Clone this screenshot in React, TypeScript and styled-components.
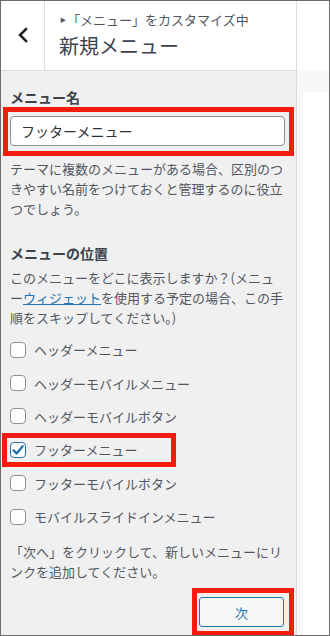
import styled, { createGlobalStyle } from "styled-components";

const GlobalStyle = createGlobalStyle`
  html, body {
    margin: 0;
    padding: 0;
    background: #ffffff;
  }
  *, *::before, *::after {
    box-sizing: border-box;
  }
  body {
    font-family: "Noto Sans CJK JP", "Noto Sans", sans-serif;
    -webkit-font-smoothing: antialiased;
  }
`;

const Frame = styled.div`
  width: 330px;
  height: 636px;
  display: flex;
  border: 1px solid #6b6b6b;
  overflow: hidden;
`;

const Sidebar = styled.div`
  width: 296px;
  flex: none;
  display: flex;
  flex-direction: column;
  background: #f0f0f1;
  border-right: 1px solid #dcdcde;
`;

const Header = styled.div`
  height: 70px;
  flex: none;
  display: flex;
  background: #ffffff;
  border-bottom: 1px solid #dcdcde;
`;

const BackButton = styled.div`
  width: 44px;
  flex: none;
  display: flex;
  align-items: center;
  justify-content: center;
  border-right: 1px solid #dcdcde;
  padding-bottom: 2px;
`;

const TitleBlock = styled.div`
  display: flex;
  flex-direction: column;
  padding: 9px 0 0 14px;
`;

const Breadcrumb = styled.div`
  font-size: 13px;
  line-height: 20px;
  color: #50575e;
  display: flex;
  align-items: center;
`;

const Arrow = styled.span`
  font-size: 6px;
  margin: 0 1px 0 1px;
  color: #50575e;
`;

const Title = styled.div`
  font-size: 20px;
  line-height: 28px;
  color: #3c434a;
  margin-top: 2px;
`;

const Body = styled.div`
  padding: 16px 9px 0 9px;
  display: flex;
  flex-direction: column;
`;

const Heading = styled.div<{ $top?: number }>`
  font-size: 14px;
  line-height: 20px;
  font-weight: 700;
  color: #3c434a;
  margin-top: ${(p) => p.$top ?? 0}px;
`;

const Text = styled.p<{ $top?: number }>`
  margin: ${(p) => p.$top ?? 0}px 0 0 0;
  font-size: 13px;
  line-height: 20px;
  color: #50575e;
  white-space: nowrap;
`;

const Link = styled.a`
  color: #2271b1;
  text-decoration: underline;
`;

const RedFrame = styled.div<{ $pad: string; $left: number; $width: number }>`
  border: 5px solid #f21b0c;
  padding: ${(p) => p.$pad};
  margin-left: ${(p) => p.$left}px;
  width: ${(p) => p.$width}px;
`;

const NameInput = styled.input`
  display: block;
  width: 275px;
  height: 30px;
  padding: 0 10px;
  border: 1px solid #8c8f94;
  border-radius: 4px;
  background: #ffffff;
  font-family: "Noto Sans CJK JP", "Noto Sans", sans-serif;
  font-size: 14px;
  color: #2c3338;
  outline: none;
`;

const Options = styled.div`
  margin-top: 5px;
  display: flex;
  flex-direction: column;
`;

const Row = styled.label<{ $marked?: boolean }>`
  position: relative;
  height: 33.4px;
  display: flex;
  align-items: center;
  gap: 8px;
  font-size: 13px;
  color: #50575e;

  &::after {
    content: "";
    display: ${(p) => (p.$marked ? "block" : "none")};
    position: absolute;
    left: -8px;
    top: 0;
    width: 174px;
    height: 34px;
    border: 5px solid #f21b0c;
    pointer-events: none;
  }
`;

const Box = styled.span<{ $checked?: boolean }>`
  width: 16px;
  height: 16px;
  flex: none;
  display: flex;
  align-items: center;
  justify-content: center;
  background: #ffffff;
  border: 1px solid ${(p) => (p.$checked ? "#2271b1" : "#8c8f94")};
  border-radius: 4px;
`;

const Footer = styled.div`
  display: flex;
  justify-content: flex-end;
  margin-top: 6px;
  margin-right: -7px;
`;

const NextButton = styled.button`
  width: 85px;
  height: 30px;
  border: 1px solid #2271b1;
  border-radius: 3px;
  background: #f6f7f7;
  color: #2271b1;
  font-family: "Noto Sans CJK JP", "Noto Sans", sans-serif;
  font-size: 13px;
  padding: 0;
`;

const Preview = styled.div`
  flex: 1;
  display: flex;
  flex-direction: column;
  background: #f6f7f7;
`;

const PreviewTop = styled.div`
  height: 69px;
  background: #ffffff;
`;

const PreviewCard = styled.div`
  flex: 1;
  margin: 22px 0 0 6px;
  background: #ffffff;
`;

const Chevron = () => (
  <svg width="12" height="16" viewBox="0 0 12 16">
    <path d="M9 2 L3 8 L9 14" fill="none" stroke="#1d2327" strokeWidth="2.6" strokeLinecap="square" />
  </svg>
);

const Check = () => (
  <svg width="14" height="14" viewBox="0 0 14 14">
    <path d="M2.6 7.4 L5.6 10.4 L11.6 3.2" fill="none" stroke="#2271b1" strokeWidth="2.4" strokeLinecap="round" strokeLinejoin="round" />
  </svg>
);

const locations = [
  { label: "ヘッダーメニュー", checked: false },
  { label: "ヘッダーモバイルメニュー", checked: false },
  { label: "ヘッダーモバイルボタン", checked: false },
  { label: "フッターメニュー", checked: true },
  { label: "フッターモバイルボタン", checked: false },
  { label: "モバイルスライドインメニュー", checked: false },
];

export default function App() {
  return (
    <>
      <GlobalStyle />
      <Frame>
        <Sidebar>
          <Header>
            <BackButton>
              <Chevron />
            </BackButton>
            <TitleBlock>
              <Breadcrumb>
                <Arrow>▶</Arrow>「メニュー」をカスタマイズ中
              </Breadcrumb>
              <Title>新規メニュー</Title>
            </TitleBlock>
          </Header>
          <Body>
            <Heading>メニュー名</Heading>
            <RedFrame $pad="4px 4px 5px 2px" $left={-7} $width={291}>
              <NameInput defaultValue="フッターメニュー" />
            </RedFrame>
            <Text $top={3}>
              テーマに複数のメニューがある場合、区別のつ
              <br />
              きやすい名前をつけておくと管理するのに役立
              <br />
              つでしょう。
            </Text>
            <Heading $top={24}>メニューの位置</Heading>
            <Text $top={5}>
              このメニューをどこに表示しますか？(メニュ
              <br />
              ー<Link>ウィジェット</Link>を使用する予定の場合、この手
              <br />
              順をスキップしてください。)
            </Text>
            <Options>
              {locations.map((loc) => (
                <Row key={loc.label} $marked={loc.checked}>
                  <Box $checked={loc.checked}>{loc.checked && <Check />}</Box>
                  {loc.label}
                </Row>
              ))}
            </Options>
            <Text $top={9}>
              「次へ」をクリックして、新しいメニューにリ
              <br />
              ンクを追加してください。
            </Text>
            <Footer>
              <RedFrame $pad="4px 5px 4px 2px" $left={0} $width={102}>
                <NextButton>次</NextButton>
              </RedFrame>
            </Footer>
          </Body>
        </Sidebar>
        <Preview>
          <PreviewTop />
          <PreviewCard />
        </Preview>
      </Frame>
    </>
  );
}
